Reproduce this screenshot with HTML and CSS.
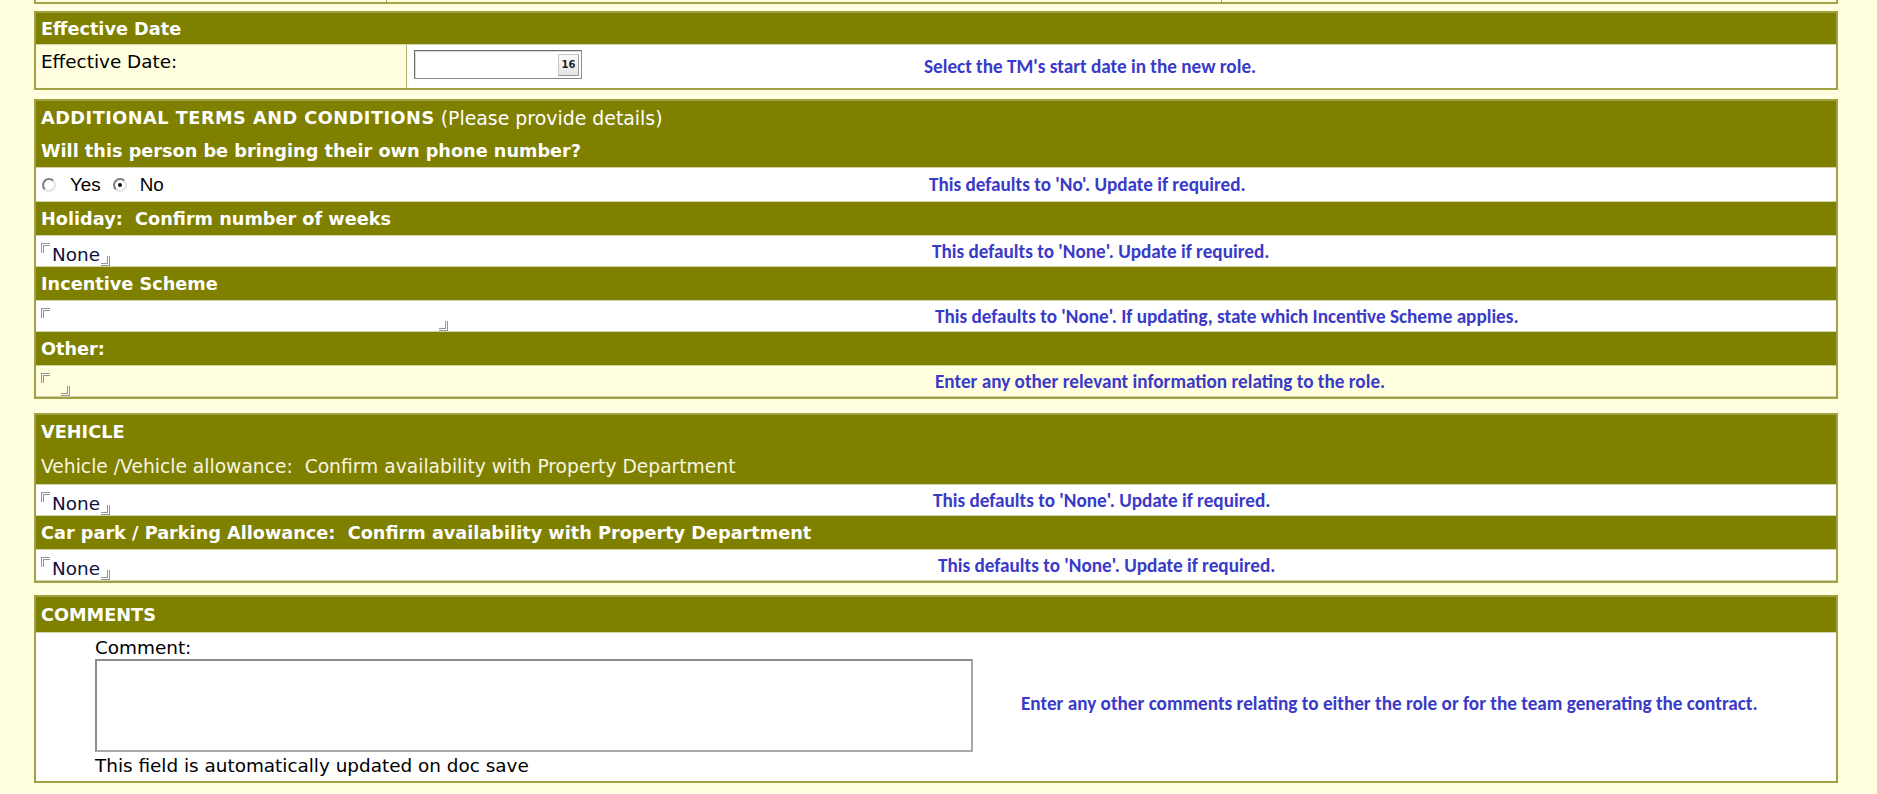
FILE: index.html
```html
<!DOCTYPE html>
<html lang="en">
<head>
  <meta charset="UTF-8" />
  <title>Change of Role</title>
  <link rel="stylesheet" href="styles.css">
</head>
<body>
<div class="page">

  <!-- end of previous block -->
  <div class="prev">
    <div class="prev-cell prev-cell--a"></div>
    <div class="prev-cell prev-cell--b"></div>
    <div class="prev-cell"></div>
  </div>

  <!-- Effective date -->
  <section class="panel panel--date">
    <div class="hdr hdr--date">Effective Date</div>
    <div class="row row--date">
      <div class="label-cell">Effective Date:</div>
      <div class="input-cell">
        <span class="datebox"><span class="cal">16</span></span>
      </div>
      <div class="help">Select the TM's start date in the new role.</div>
    </div>
  </section>

  <!-- Additional terms -->
  <section class="panel panel--terms">
    <div class="hdr"><span class="caps">ADDITIONAL TERMS AND CONDITIONS</span><span class="thin"> (Please provide details)</span></div>
    <div class="hdr">Will this person be bringing their own phone number?</div>
    <div class="row row--tall">
      <div class="choices">
        <label class="choice"><input type="radio" name="phone" class="radio"> Yes</label>
        <label class="choice"><input type="radio" name="phone" class="radio" checked> No</label>
      </div>
      <div class="help">This defaults to 'No'. Update if required.</div>
    </div>
    <div class="hdr">Holiday:&nbsp; Confirm number of weeks</div>
    <div class="row">
      <div><span class="field"><span class="fb fb--open"></span>None<span class="fb fb--close"></span></span></div>
      <div class="help nudge-3">This defaults to 'None'. Update if required.</div>
    </div>
    <div class="hdr">Incentive Scheme</div>
    <div class="row">
      <div><span class="field"><span class="fb fb--open"></span><span class="blank blank--wide"></span><span class="fb fb--close"></span></span></div>
      <div class="help nudge-6">This defaults to 'None'. If updating, state which Incentive Scheme applies.</div>
    </div>
    <div class="hdr">Other:</div>
    <div class="row row--pale">
      <div><span class="field"><span class="fb fb--open"></span><span class="blank"></span><span class="fb fb--close"></span></span></div>
      <div class="help nudge-6">Enter any other relevant information relating to the role.</div>
    </div>
  </section>

  <!-- Vehicle -->
  <section class="panel panel--vehicle">
    <div class="hdr">VEHICLE</div>
    <div class="hdr hdr--sub">Vehicle /Vehicle allowance:&nbsp; Confirm availability with Property Department</div>
    <div class="row">
      <div><span class="field"><span class="fb fb--open"></span>None<span class="fb fb--close"></span></span></div>
      <div class="help nudge-4">This defaults to 'None'. Update if required.</div>
    </div>
    <div class="hdr">Car park / Parking Allowance:&nbsp; Confirm availability with Property Department</div>
    <div class="row">
      <div><span class="field"><span class="fb fb--open"></span>None<span class="fb fb--close"></span></span></div>
      <div class="help nudge-9">This defaults to 'None'. Update if required.</div>
    </div>
  </section>

  <!-- Comments -->
  <section class="panel panel--comments">
    <div class="hdr hdr--comments">COMMENTS</div>
    <div class="comments">
      <div class="comment-box">
        <div class="comment-label">Comment:</div>
        <textarea class="comment-area"></textarea>
        <div class="comment-note">This field is automatically updated on doc save</div>
      </div>
      <div class="help help--comments">Enter any other comments relating to either the role or for the team generating the contract.</div>
    </div>
  </section>

</div>
</body>
</html>
```

FILE: styles.css
```css
body {
  margin: 0;
  background: #ffffe0;
  font-family: "DejaVu Sans", Verdana, sans-serif;
  font-size: 18.4px;
  color: #000;
}
.page {
  padding: 0 39px 0 34px;
}
/* ---------- previous block (cut off) ---------- */
.prev {
  display: flex;
  height: 4px;
  box-sizing: border-box;
  border: 2px solid #a3a34a;
  border-top: none;
}
.prev-cell { flex: 1; }
.prev-cell--a { flex: 0 0 350px; border-right: 1px solid #a3a34a; }
.prev-cell--b { flex: 0 0 834px; border-right: 1px solid #a3a34a; }

/* ---------- panels ---------- */
.panel {
  border: 2px solid #a0a044;
  background: #fff;
}
.panel--date { margin-top: 7px; }
.panel--terms { margin-top: 9px; }
.panel--vehicle { margin-top: 14px; }
.panel--comments { margin-top: 12px; }

.hdr {
  display: flex;
  align-items: center;
  height: 33px;
  box-sizing: border-box;
  padding: 0 5px;
  background: #808000;
  color: #fff;
  font-weight: bold;
  font-size: 17.7px;
  white-space: pre;
}
.hdr--date { height: 31px; }
.hdr--sub {
  height: 36px;
  font-weight: normal;
  font-size: 18.7px;
  color: #f6f6e2;
}
.hdr--comments { height: 35px; }
.caps { letter-spacing: 0.5px; }
.thin { font-weight: normal; font-size: 18.9px; }

.row {
  display: grid;
  grid-template-columns: 893px 1fr;
  align-items: center;
  height: 32px;
  box-sizing: border-box;
  padding-left: 5px;
  background: #fff;
  border-top: 1px solid #d4d4a8;
  border-bottom: 1px solid #d4d4a8;
}
.row--tall { height: 35px; }
.row--pale { background: #ffffe0; }

/* ---------- help text ---------- */
.help {
  font-family: Carlito, Calibri, "DejaVu Sans Condensed", sans-serif;
  font-weight: bold;
  font-size: 19.2px;
  color: #3a3ac8;
  margin-left: -5px;
}
.nudge-3 { padding-left: 3px; }
.nudge-4 { padding-left: 4px; }
.nudge-6 { padding-left: 6px; }
.nudge-9 { padding-left: 9px; }

/* ---------- effective date row ---------- */
.row--date {
  grid-template-columns: 371px 517px 1fr;
  align-items: stretch;
  height: 44px;
  padding-left: 0;
  border-bottom: none;
}
.label-cell {
  background: #ffffe0;
  border-right: 1px solid #b4b46a;
  padding: 6px 5px 0;
}
.input-cell { padding: 5px 0 0 7px; }
.row--date .help { align-self: center; margin-left: 0; }
.datebox {
  display: flex;
  justify-content: flex-end;
  align-items: center;
  width: 168px;
  height: 29px;
  box-sizing: border-box;
  border: 1px solid #8a8a8a;
  border-top-color: #6e6e6e;
  border-left-color: #6e6e6e;
  box-shadow: inset 1px 1px 0 #d8d8d8;
  background: #fff;
  padding-right: 2px;
}
.cal {
  display: flex;
  align-items: center;
  justify-content: center;
  width: 21px;
  height: 22px;
  box-sizing: border-box;
  border: 1px solid #c8c8c8;
  border-right-color: #9a9a9a;
  border-bottom-color: #9a9a9a;
  background: linear-gradient(#fbfbfb, #e4e4e4);
  font-family: "DejaVu Sans", sans-serif;
  font-size: 10px;
  font-weight: bold;
  color: #222;
}

/* ---------- radios ---------- */
.choices {
  display: flex;
  align-items: center;
  font-family: "Liberation Sans", Arial, sans-serif;
  font-size: 18.8px;
  padding-left: 1px;
}
.choice {
  display: flex;
  align-items: center;
  margin-right: 12px;
}
.radio {
  appearance: none;
  -webkit-appearance: none;
  width: 14px;
  height: 14px;
  margin: 0 14px 0 0;
  box-sizing: border-box;
  border: 2px solid;
  border-color: #7c7c7c #e2e2e2 #e2e2e2 #7c7c7c;
  border-radius: 50%;
  background: #fff;
  position: relative;
}
.radio:checked::after {
  content: "";
  position: absolute;
  left: 3px;
  top: 3px;
  width: 4px;
  height: 4px;
  border-radius: 50%;
  background: #111;
}
.choice + .choice .radio { margin-right: 13px; }

/* ---------- notes field delimiters ---------- */
.field {
  display: inline-flex;
  align-items: center;
  height: 23px;
  font-family: "DejaVu Sans", sans-serif;
  font-size: 18.4px;
  color: #101040;
}
.fb {
  width: 9px;
  height: 10px;
  box-sizing: border-box;
  border: 3px double #949494;
}
.fb--open {
  align-self: flex-start;
  border-right: none;
  border-bottom: none;
  margin-right: 2px;
}
.fb--close {
  align-self: flex-end;
  border-left: none;
  border-top: none;
  margin-left: 1px;
}
.blank { display: inline-block; width: 8px; }
.blank--wide { width: 386px; }

/* ---------- comments ---------- */
.comments {
  display: flex;
  align-items: center;
  height: 149px;
  box-sizing: border-box;
  padding: 4px 0 0 59px;
  border-top: 1px solid #d4d4a8;
}
.comment-box { align-self: flex-start; }
.comment-label { line-height: 22px; }
.comment-area {
  display: block;
  width: 878px;
  height: 93px;
  box-sizing: border-box;
  margin: 0;
  border: 2px solid #8c8c8c;
  border-right-color: #a8a8a8;
  border-bottom-color: #a8a8a8;
  resize: none;
  background: #fff;
}
.comment-note { line-height: 22px; margin-top: 3px; }
.help--comments { margin: 0 0 11px 48px; }
```
